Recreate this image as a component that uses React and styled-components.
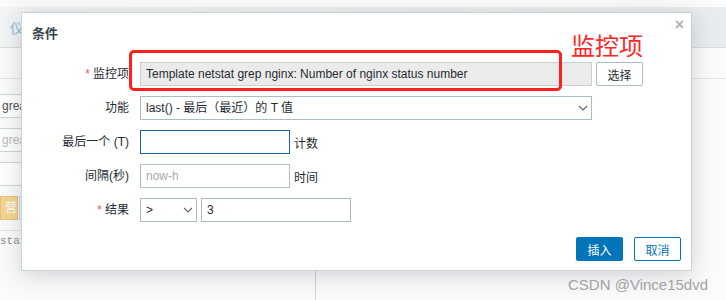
import React from "react";
import styled, { createGlobalStyle } from "styled-components";

const GlobalStyle = createGlobalStyle`
  html, body {
    margin: 0;
    padding: 0;
    width: 726px;
    height: 300px;
    overflow: hidden;
    background: #fff;
    font-family: "Liberation Sans", Arial, "Noto Sans CJK SC", sans-serif;
  }
`;

const Page = styled.div`
  position: relative;
  width: 726px;
  height: 300px;
  overflow: hidden;
  background: #fbfbfc;
`;

const TopBar = styled.div`
  height: 40px;
  margin-top: 7px;
  background: linear-gradient(to right, #f3f4f5, #e9ecee);
  border-bottom: 1px solid #d6dcdf;
  display: flex;
  align-items: center;
  padding-left: 10px;
`;

const TabText = styled.span`
  font-size: 14px;
  color: #8dbde0;
`;

const Content = styled.div`
  display: grid;
  grid-template-columns: 315px 1fr;
  height: 252px;
`;

const LeftCol = styled.div`
  display: flex;
  flex-direction: column;
`;

const RightCol = styled.div`
  border-left: 1px solid #cfd5d8;
  display: flex;
  flex-direction: column;
`;

const RowLine = styled.div`
  height: 30px;
  border-bottom: 1px solid #dfe4e7;
  flex: none;
`;

const Fields = styled.div`
  display: flex;
  flex-direction: column;
  gap: 10px;
  padding-top: 15px;
`;

const BgInput = styled.div`
  height: 22px;
  border: 1px solid #cdd4d8;
  border-left: none;
  padding-left: 2px;
  font-size: 12px;
  line-height: 22px;
  color: ${(p) => (p.$muted ? "#b7bcbf" : "#4a555b")};
  background: #fff;
`;

const BgButtons = styled.div`
  display: flex;
  gap: 1px;
  height: 24px;
`;

const YellowBtn = styled.div`
  width: 16px;
  background: #f6d590;
  border: 1px solid #e7c27a;
  color: #fff;
  font-size: 12px;
  line-height: 22px;
  text-align: right;
  overflow: hidden;
`;

const GreyBtn = styled.div`
  flex: 1;
  border: 1px solid #cdd4d8;
`;

const Code = styled.div`
  border-top: 1px solid #dfe4e7;
  margin-top: 10px;
  padding-top: 4px;
  font-family: "Liberation Mono", monospace;
  font-size: 11px;
  color: #8a9196;
`;

const Overlay = styled.div`
  position: absolute;
  left: 21px;
  top: 12px;
  width: 669px;
  height: 257px;
  background: #fff;
  border: 1px solid #cbd3d7;
  box-shadow: 0 4px 22px rgba(40, 60, 75, 0.22);
  display: flex;
  flex-direction: column;
`;

const DialogHead = styled.div`
  height: 38px;
  padding-left: 10px;
  display: flex;
  align-items: center;
`;

const Title = styled.h4`
  margin: 0;
  font-size: 13px;
  font-weight: bold;
  color: #33434d;
`;

const Close = styled.span`
  position: absolute;
  right: 7px;
  top: 3px;
  font-size: 16px;
  font-weight: bold;
  color: #aab3b8;
`;

const Note = styled.span`
  position: absolute;
  left: 549px;
  top: 14px;
  font-size: 24px;
  color: #ff2626;
`;

const Mark = styled.div`
  position: absolute;
  left: 107px;
  top: 37px;
  width: 427px;
  height: 35px;
  border: 3.5px solid #ff1f1f;
  border-radius: 5px;
  pointer-events: none;
`;

const Form = styled.div`
  display: grid;
  grid-template-columns: 107px auto;
  column-gap: 11px;
  row-gap: 10px;
  padding-top: 11px;
`;

const Label = styled.label`
  font-size: 12px;
  color: #1f2c33;
  text-align: right;
  line-height: 24px;
`;

const Star = styled.span`
  color: #e45959;
  margin-right: 3px;
`;

const Field = styled.div`
  display: flex;
  align-items: center;
  gap: 4px;
  font-size: 12px;
  color: #1f2c33;
`;

const Input = styled.div`
  box-sizing: border-box;
  width: ${(p) => p.$w}px;
  height: 24px;
  padding: 0 5px;
  border: 1px solid ${(p) => (p.$focus ? "#1f65a0" : p.$disabled ? "#c8d0d4" : "#acbbc4")};
  background: ${(p) => (p.$disabled ? "#ebebeb" : "#fff")};
  color: ${(p) => (p.$placeholder ? "#a6abaf" : "#1f2c33")};
  font-size: 12px;
  line-height: 22px;
  white-space: nowrap;
  overflow: hidden;
`;

const Select = styled(Input)`
  display: flex;
  align-items: center;
  justify-content: space-between;
  padding-right: 3px;
`;

const Button = styled.button`
  box-sizing: border-box;
  width: 47px;
  height: 24px;
  padding: 0;
  font-family: inherit;
  font-size: 12px;
  border-radius: 2px;
  border: 1px solid ${(p) => (p.$primary || p.$blue ? "#0275b8" : "#acbbc4")};
  background: ${(p) => (p.$primary ? "#0275b8" : "#fff")};
  color: ${(p) => (p.$primary ? "#fff" : p.$blue ? "#0275b8" : "#1f2c33")};
`;

const Footer = styled.div`
  display: flex;
  justify-content: flex-end;
  gap: 11px;
  padding: 15px 10px 0 0;
`;

const Watermark = styled.span`
  position: absolute;
  left: 568px;
  top: 276px;
  font-size: 15px;
  color: #a3a3a3;
`;

const Chevron = () => (
  <svg width="10" height="6" viewBox="0 0 10 6">
    <path d="M1 1l4 4 4-4" fill="none" stroke="#5a666d" strokeWidth="1.1" />
  </svg>
);

export default function App() {
  return (
    <Page>
      <GlobalStyle />
      <TopBar>
        <TabText>仪</TabText>
      </TopBar>
      <Content>
        <LeftCol>
          <RowLine />
          <Fields>
            <BgInput>greater</BgInput>
            <BgInput $muted>greater</BgInput>
            <BgInput />
            <BgButtons>
              <YellowBtn>营</YellowBtn>
              <GreyBtn />
            </BgButtons>
          </Fields>
          <Code>status</Code>
        </LeftCol>
        <RightCol>
          <RowLine />
        </RightCol>
      </Content>

      <Overlay>
        <DialogHead>
          <Title>条件</Title>
        </DialogHead>
        <Close>×</Close>
        <Note>监控项</Note>
        <Form>
          <Label>
            <Star>*</Star>监控项
          </Label>
          <Field>
            <Input $w={452} $disabled>
              Template netstat grep nginx: Number of nginx status number
            </Input>
            <Button>选择</Button>
          </Field>

          <Label>功能</Label>
          <Field>
            <Select $w={452}>
              <span>last() - 最后（最近）的 T 值</span>
              <Chevron />
            </Select>
          </Field>

          <Label>最后一个 (T)</Label>
          <Field>
            <Input $w={150} $focus />
            计数
          </Field>

          <Label>间隔(秒)</Label>
          <Field>
            <Input $w={150} $placeholder>
              now-h
            </Input>
            时间
          </Field>

          <Label>
            <Star>*</Star>结果
          </Label>
          <Field>
            <Select $w={57}>
              <span>&gt;</span>
              <Chevron />
            </Select>
            <Input $w={150}>3</Input>
          </Field>
        </Form>
        <Mark />
        <Footer>
          <Button $primary>插入</Button>
          <Button $blue>取消</Button>
        </Footer>
      </Overlay>
      <Watermark>CSDN @Vince15dvd</Watermark>
    </Page>
  );
}
